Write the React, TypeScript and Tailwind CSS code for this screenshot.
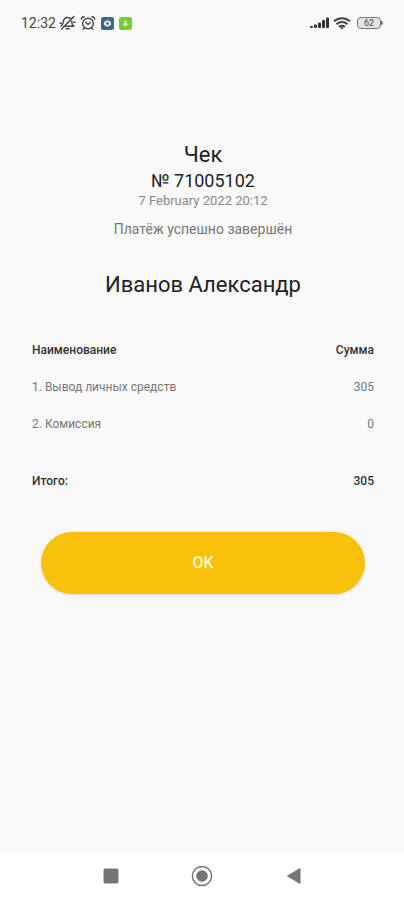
const items = [
  { title: '1. Вывод личных средств', amount: 305 },
  { title: '2. Комиссия', amount: 0 },
];

function BellOffIcon() {
  return (
    <svg width="17" height="16" viewBox="0 0 17 16" fill="none" stroke="#484848" strokeWidth="1.500" strokeLinecap="round" strokeLinejoin="round">
      <path d="M2 11.200c1.800-1 2-2.200 2.300-4.200C4.700 4.200 6.200 2.600 8.600 2.600c1.200 0 2 .3 2.800 1" />
      <path d="M12.700 6.200c0 2.400.3 3.800 2 5H6" />
      <path d="M14.800 1.600 2.600 14M7.300 13.700h2.800" />
      <path d="M1 8.300h1.200M14.800 7.300H16" />
    </svg>
  );
}

function AlarmIcon() {
  return (
    <svg width="16" height="16" viewBox="0 0 16 16" fill="none" stroke="#484848" strokeWidth="1.400" strokeLinecap="round" strokeLinejoin="round">
      <circle cx="8" cy="8.500" r="5.300" />
      <path d="M1.300 4.200C1.500 2.700 2.700 1.700 4.200 1.700M14.700 4.200c-.2-1.500-1.400-2.500-2.900-2.500" />
      <path d="M5.700 7.300 8 9.400l2.300-1.900M4.200 13l-1 1.200M11.800 13l1 1.200" />
    </svg>
  );
}

function SignalIcon() {
  return (
    <svg width="19" height="12" viewBox="0 0 19 12" fill="#303030">
      <rect x="0" y="9" width="3" height="2" rx="1" />
      <rect x="4" y="7.500" width="3" height="3.500" rx="1" />
      <rect x="8" y="5.500" width="3" height="5.500" rx="1" />
      <rect x="12" y="3" width="3" height="8" rx="1" />
      <rect x="16" y="0.500" width="3" height="10.500" rx="1" />
    </svg>
  );
}

function WifiIcon() {
  return (
    <svg width="18" height="13" viewBox="0 0 18 13" fill="none" stroke="#454545" strokeWidth="2.100">
      <path d="M1 4.300C5.600.2 12.400.2 17 4.300" />
      <path d="M3.500 7.200c3.300-2.800 7.700-2.800 11 0" />
      <path d="M6 10c1.900-1.500 4.100-1.500 6 0" />
      <path d="M7.300 10.800 9 12.800l1.700-2c-1-.8-2.400-.8-3.400 0Z" fill="#454545" stroke="none" />
    </svg>
  );
}

function StatusBar() {
  return (
    <header className="flex h-[46px] items-center justify-between px-[21px] text-[#444444]">
      <div className="flex items-center">
        <span className="text-sm">12:32</span>
        <div className="ml-[3px] flex items-center gap-1">
          <BellOffIcon />
          <AlarmIcon />
          <svg className="ml-px" width="13" height="13" viewBox="0 0 13 13">
            <rect width="13" height="13" rx="2.500" fill="#426681" />
            <path d="M6.500 3 10 5v3L6.500 10 3 8V5Z" fill="#dbe8f2" />
            <circle cx="6.500" cy="6.500" r="1.300" fill="#426681" />
          </svg>
          <svg className="ml-px" width="13" height="13" viewBox="0 0 13 13">
            <rect width="13" height="13" rx="2.500" fill="#7ccb35" />
            <path d="M6.500 3.500v5M4.500 6.500l2 2 2-2" fill="none" stroke="#d5f3b8" strokeWidth="1.700" />
          </svg>
        </div>
      </div>
      <div className="flex items-center gap-1">
        <SignalIcon />
        <WifiIcon />
        <div className="ml-0.5 flex items-center">
          <span className="flex h-3 w-6 items-center justify-center rounded-sm border border-[#777777] bg-[#e4e4e4] text-[9px] leading-3 font-medium text-[#666666]">62</span>
          <span className="h-1 w-0.5 rounded-r-sm bg-[#666666]" />
        </div>
      </div>
    </header>
  );
}

function NavBar() {
  return (
    <nav className="flex h-12 items-center justify-center gap-[69px] bg-white">
      <button type="button" aria-label="Recent apps">
        <svg width="22" height="22" viewBox="0 0 22 22">
          <rect x="3.500" y="3.500" width="15" height="15" rx="2" fill="#757575" />
        </svg>
      </button>
      <button type="button" aria-label="Home">
        <svg width="22" height="22" viewBox="0 0 22 22">
          <circle cx="11" cy="11" r="9.600" fill="none" stroke="#757575" strokeWidth="1.500" />
          <circle cx="11" cy="11" r="5.800" fill="#757575" />
        </svg>
      </button>
      <button type="button" aria-label="Back">
        <svg width="22" height="22" viewBox="0 0 22 22">
          <path d="M5.500 11 18 3.500v15Z" fill="#757575" stroke="#757575" strokeLinejoin="round" />
        </svg>
      </button>
    </nav>
  );
}

export default function App() {
  return (
    <div className="flex min-h-screen flex-col bg-[#f9f9f9] font-['Roboto',sans-serif]">
      <StatusBar />
      <main className="flex-1 pt-[95px] pr-[30px] pl-8">
        <div className="text-center">
          <h1 className="text-[22px] leading-7 text-[#222222]">Чек</h1>
          <p className="text-lg leading-6 text-[#222222]">№ 71005102</p>
          <p className="text-[13px] leading-4 text-[#888888]">7 February 2022 20:12</p>
          <p className="mt-[10px] text-sm leading-5 text-[#777777]">Платёж успешно завершён</p>
          <h2 className="mt-8 text-[22px] leading-7 text-[#222222]">Иванов Александр</h2>
        </div>

        <table className="mt-8 w-full text-xs">
          <thead className="text-[#333333]">
            <tr className="h-[37px]">
              <th scope="col" className="text-left font-medium">Наименование</th>
              <th scope="col" className="text-right font-medium">Сумма</th>
            </tr>
          </thead>
          <tbody className="text-[#777777]">
            {items.map((item) => (
              <tr key={item.title} className="h-[37px]">
                <td>{item.title}</td>
                <td className="text-right">{item.amount}</td>
              </tr>
            ))}
          </tbody>
          <tfoot className="text-[#333333]">
            <tr className="h-[58px]">
              <th scope="row" className="pt-5 text-left font-medium">Итого:</th>
              <td className="pt-5 text-right font-medium">305</td>
            </tr>
          </tfoot>
        </table>

        <div className="mt-8 px-[9px]">
          <button type="button" className="h-[62px] w-full rounded-full bg-[#f9c20a] text-base font-medium text-[#fff8dc] shadow-sm">
            OK
          </button>
        </div>
      </main>
      <NavBar />
    </div>
  );
}
